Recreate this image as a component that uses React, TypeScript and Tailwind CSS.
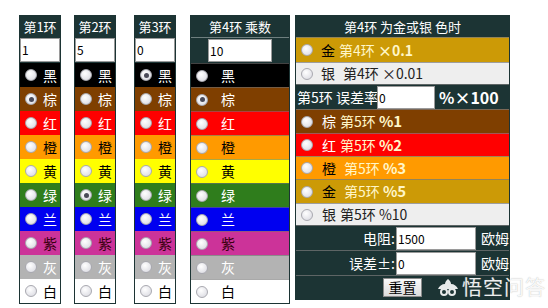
import React from "react";

const DARK = "bg-[#1c3434]";

type Band = { name: string; bg: string; fg: string };

const bands: Band[] = [
  { name: "黑", bg: "bg-[#000000]", fg: "text-white" },
  { name: "棕", bg: "bg-[#7f3f00]", fg: "text-white" },
  { name: "红", bg: "bg-[#ff0000]", fg: "text-white" },
  { name: "橙", bg: "bg-[#ff9a00]", fg: "text-black" },
  { name: "黄", bg: "bg-[#ffff00]", fg: "text-black" },
  { name: "绿", bg: "bg-[#2f7d1c]", fg: "text-white" },
  { name: "兰", bg: "bg-[#0000f0]", fg: "text-white" },
  { name: "紫", bg: "bg-[#cc3399]", fg: "text-[#3a0010]" },
  { name: "灰", bg: "bg-[#b3b3b3]", fg: "text-white" },
  { name: "白", bg: "bg-white", fg: "text-black" },
];

function Radio({ checked = false }: { checked?: boolean }) {
  return (
    <span className="w-[12px] h-[12px] shrink-0 rounded-full border border-[#a9a9b0] bg-[radial-gradient(circle_at_40%_35%,#ffffff,#d6d6de)] flex items-center justify-center">
      {checked && <span className="w-[5px] h-[5px] rounded-full bg-[#4a4a58]" />}
    </span>
  );
}

function NarrowCol({ title, value, checked, className }: { title: string; value: string; checked: number; className?: string }) {
  return (
    <div className={`w-[42px] border border-[#1c3434] ${className ?? ""}`}>
      <div className={`h-[21px] ${DARK} text-white text-[13px] leading-[21px] text-center`}>{title}</div>
      <div className={`h-[26px] ${DARK} py-[1px]`}>
        <div className="h-[24px] bg-white border border-[#9a9a9a] text-[12px] leading-[22px] pl-[1px] text-black">{value}</div>
      </div>
      {bands.map((b, i) => (
        <div key={b.name} className={`h-[24px] flex items-center ${b.bg}`}>
          <span className="ml-[5px]">
            <Radio checked={i === checked} />
          </span>
          <span className={`ml-auto mr-[3px] text-[14px] ${b.fg}`}>{b.name}</span>
        </div>
      ))}
    </div>
  );
}

function Col4() {
  return (
    <div className="w-[100px] border border-[#1c3434] ml-[14px]">
      <div className={`h-[21px] ${DARK} text-white text-[13px] leading-[21px] text-center`}>第4环 乘数</div>
      <div className={`h-[26px] ${DARK} border-t border-[#6f7f7f] flex items-center pl-[17px]`}>
        <div className="w-[64px] h-[23px] bg-white border border-[#9a9a9a] text-[12px] leading-[21px] pl-[1px] text-black">10</div>
      </div>
      {bands.map((b, i) => (
        <div key={b.name} className={`h-[24px] flex items-center border-t border-[#707070]/60 ${b.bg}`}>
          <span className="ml-[5px]">
            <Radio checked={i === 1} />
          </span>
          <span className={`ml-[13px] text-[14px] ${b.fg}`}>{b.name}</span>
        </div>
      ))}
    </div>
  );
}

function Row({ bg, children, h = "h-[24px]" }: { bg: string; children: React.ReactNode; h?: string }) {
  return <div className={`${h} flex items-center border-t border-[#7a7a7a]/70 ${bg}`}>{children}</div>;
}

function RightPanel() {
  return (
    <div className={`w-[215px] ml-[5px] border border-[#1c3434] ${DARK} text-[13px]`}>
      <div className="h-[21px] text-white leading-[21px] text-center">第4环 为金或银 色时</div>
      <Row bg="bg-[#cc9a06]" h="h-[25px]">
        <span className="ml-[5px]"><Radio /></span>
        <span className="ml-[8px] text-black text-[14px]">金</span>
        <span className="ml-[4px] text-[#fff6c8] text-[14px]">第4环 <b>×0.1</b></span>
      </Row>
      <Row bg="bg-[#eeeeee]" h="h-[22px]">
        <span className="ml-[5px]"><Radio /></span>
        <span className="ml-[8px] text-[#222] text-[14px]">银</span>
        <span className="ml-[8px] text-[#222] text-[14px]">第4环 ×0.01</span>
      </Row>
      <Row bg={DARK} h="h-[25px]">
        <span className="text-white text-[14px] ml-[1px] w-[80px] whitespace-nowrap">第5环 误差率</span>
        <div className="w-[58px] h-[23px] bg-white border border-[#9a9a9a] text-[12px] leading-[21px] pl-[1px] text-black">0</div>
        <span className="ml-[4px] text-white text-[16px] font-bold">%×100</span>
      </Row>
      <Row bg="bg-[#7f3f00]">
        <span className="ml-[5px]"><Radio /></span>
        <span className="ml-[9px] text-white text-[14px]">棕</span>
        <span className="ml-[4px] text-[#fff6c8] text-[14px]">第5环 <b className="text-[15px]">%1</b></span>
      </Row>
      <Row bg="bg-[#ff0000]" h="h-[23px]">
        <span className="ml-[5px]"><Radio /></span>
        <span className="ml-[9px] text-white text-[14px]">红</span>
        <span className="ml-[4px] text-[#fff6c8] text-[14px]">第5环 <b className="text-[15px]">%2</b></span>
      </Row>
      <Row bg="bg-[#ff9a00]" h="h-[23px]">
        <span className="ml-[5px]"><Radio /></span>
        <span className="ml-[9px] text-black text-[14px]">橙</span>
        <span className="ml-[8px] text-[#fff6c8] text-[14px]">第5环 <b className="text-[15px]">%3</b></span>
      </Row>
      <Row bg="bg-[#cc9a06]">
        <span className="ml-[5px]"><Radio /></span>
        <span className="ml-[9px] text-black text-[14px]">金</span>
        <span className="ml-[8px] text-[#fff6c8] text-[14px]">第5环 <b className="text-[15px]">%5</b></span>
      </Row>
      <Row bg="bg-[#eeeeee]" h="h-[22px]">
        <span className="ml-[5px]"><Radio /></span>
        <span className="ml-[9px] text-[#222] text-[14px]">银</span>
        <span className="ml-[4px] text-[#222] text-[14px]">第5环 %10</span>
      </Row>
      <Row bg={DARK} h="h-[25px]">
        <span className="w-[100px] text-right text-white text-[14px] pr-[1px]">电阻:</span>
        <div className="w-[80px] h-[23px] bg-white border border-[#9a9a9a] text-[12px] leading-[21px] pl-[1px] text-black">1500</div>
        <span className="ml-[5px] text-white text-[14px]">欧姆</span>
      </Row>
      <Row bg={DARK} h="h-[25px]">
        <span className="w-[100px] text-right text-white text-[14px] pr-[1px]">误差±:</span>
        <div className="w-[80px] h-[23px] bg-white border border-[#9a9a9a] text-[12px] leading-[21px] pl-[1px] text-black">0</div>
        <span className="ml-[5px] text-white text-[14px]">欧姆</span>
      </Row>
      <Row bg={DARK} h="h-[24px]">
        <button className="ml-[87px] w-[39px] h-[19px] bg-[linear-gradient(#fafafa,#dcdcdc)] border border-[#8a8a8a] text-black text-[14px] leading-[17px]">
          重置
        </button>
      </Row>
    </div>
  );
}

export default function App() {
  return (
    <div
      className="relative w-[548px] h-[308px] bg-white overflow-hidden flex items-start pt-[15px] pl-[19px]"
      style={{ fontFamily: '"Noto Sans CJK SC", "Noto Sans", sans-serif' }}
    >
      <NarrowCol title="第1环" value="1" checked={1} />
      <NarrowCol title="第2环" value="5" checked={5} className="ml-[13px]" />
      <NarrowCol title="第3环" value="0" checked={0} className="ml-[18px]" />
      <Col4 />
      <RightPanel />

      {/* watermark */}
      <div className="absolute left-[437px] top-[276px] flex items-center gap-[3px] text-white/90 [text-shadow:0_0_1px_rgba(120,120,120,0.6)]">
        <svg width="22" height="20" viewBox="0 0 22 20" className="opacity-90">
          <path d="M11 2c2 2 3 3 3 5 3 0 6 2 7 5H1c1-3 4-5 7-5 0-2 1-3 3-5z" fill="#ffffff" />
          <circle cx="7" cy="15" r="3" fill="none" stroke="#ffffff" strokeWidth="2" />
          <circle cx="15" cy="15" r="3" fill="none" stroke="#ffffff" strokeWidth="2" />
        </svg>
        <span className="text-[20px] leading-[22px] tracking-[1px]">悟空问答</span>
      </div>
    </div>
  );
}
